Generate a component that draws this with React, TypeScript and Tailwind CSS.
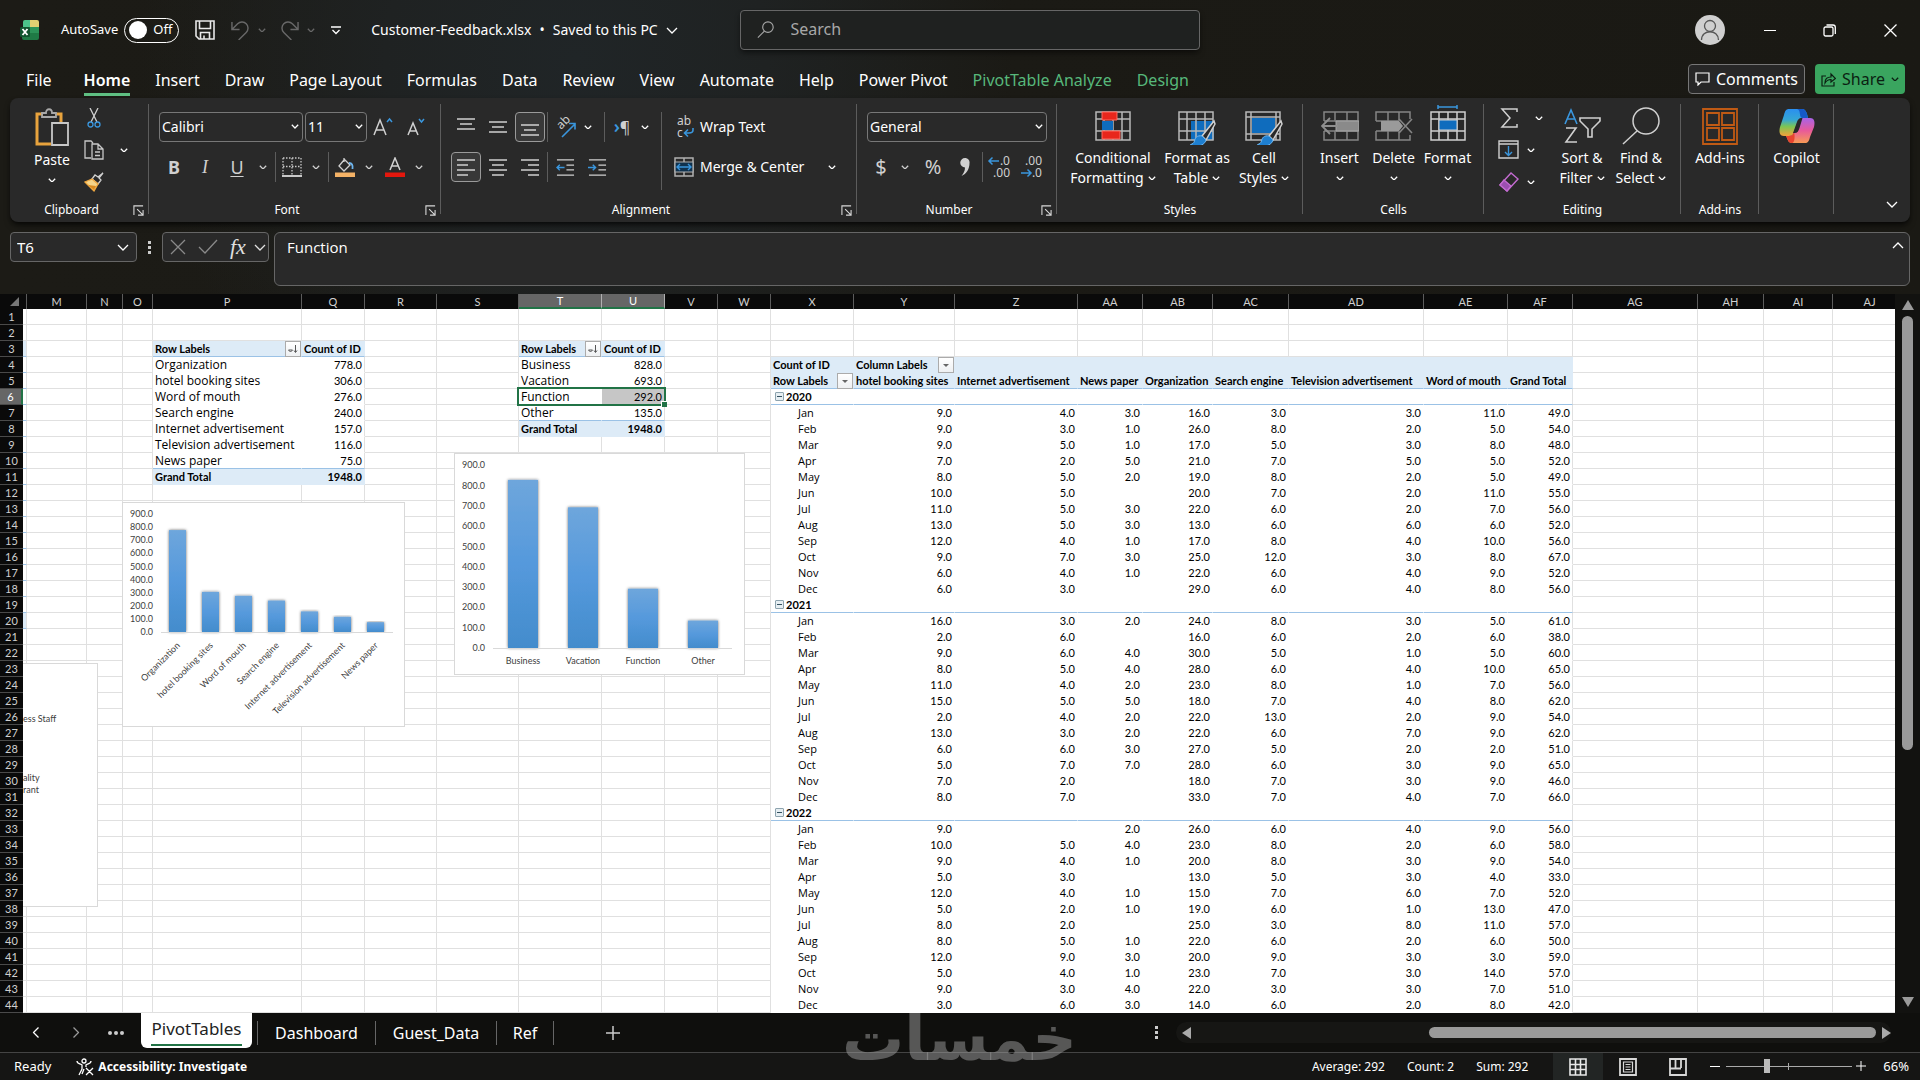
import React from 'react';

type IconProps = { className?: string };

const columns: { name: string; width: string }[] = [
  { name: '', width: 'w-1' },
  { name: 'M', width: 'w-[60px]' },
  { name: 'N', width: 'w-9' },
  { name: 'O', width: 'w-[30px]' },
  { name: 'P', width: 'w-[149px]' },
  { name: 'Q', width: 'w-[63px]' },
  { name: 'R', width: 'w-[72px]' },
  { name: 'S', width: 'w-[82px]' },
  { name: 'T', width: 'w-[83px]' },
  { name: 'U', width: 'w-[63px]' },
  { name: 'V', width: 'w-[53px]' },
  { name: 'W', width: 'w-[53px]' },
  { name: 'X', width: 'w-[83px]' },
  { name: 'Y', width: 'w-[101px]' },
  { name: 'Z', width: 'w-[123px]' },
  { name: 'AA', width: 'w-[65px]' },
  { name: 'AB', width: 'w-[70px]' },
  { name: 'AC', width: 'w-[76px]' },
  { name: 'AD', width: 'w-[135px]' },
  { name: 'AE', width: 'w-[84px]' },
  { name: 'AF', width: 'w-[65px]' },
  { name: 'AG', width: 'w-[125px]' },
  { name: 'AH', width: 'w-[66px]' },
  { name: 'AI', width: 'w-[69px]' },
  { name: 'AJ', width: '' },
];

const months = ['Jan', 'Feb', 'Mar', 'Apr', 'May', 'Jun', 'Jul', 'Aug', 'Sep', 'Oct', 'Nov', 'Dec'];

// null marks a month without entries for that source
const years: { year: string; rows: (number | null)[][] }[] = [
  {
    year: '2020',
    rows: [
      [9, 4, 3, 16, 3, 3, 11, 49],
      [9, 3, 1, 26, 8, 2, 5, 54],
      [9, 5, 1, 17, 5, 3, 8, 48],
      [7, 2, 5, 21, 7, 5, 5, 52],
      [8, 5, 2, 19, 8, 2, 5, 49],
      [10, 5, null, 20, 7, 2, 11, 55],
      [11, 5, 3, 22, 6, 2, 7, 56],
      [13, 5, 3, 13, 6, 6, 6, 52],
      [12, 4, 1, 17, 8, 4, 10, 56],
      [9, 7, 3, 25, 12, 3, 8, 67],
      [6, 4, 1, 22, 6, 4, 9, 52],
      [6, 3, null, 29, 6, 4, 8, 56],
    ],
  },
  {
    year: '2021',
    rows: [
      [16, 3, 2, 24, 8, 3, 5, 61],
      [2, 6, null, 16, 6, 2, 6, 38],
      [9, 6, 4, 30, 5, 1, 5, 60],
      [8, 5, 4, 28, 6, 4, 10, 65],
      [11, 4, 2, 23, 8, 1, 7, 56],
      [15, 5, 5, 18, 7, 4, 8, 62],
      [2, 4, 2, 22, 13, 2, 9, 54],
      [13, 3, 2, 22, 6, 7, 9, 62],
      [6, 6, 3, 27, 5, 2, 2, 51],
      [5, 7, 7, 28, 6, 3, 9, 65],
      [7, 2, null, 18, 7, 3, 9, 46],
      [8, 7, null, 33, 7, 4, 7, 66],
    ],
  },
  {
    year: '2022',
    rows: [
      [9, null, 2, 26, 6, 4, 9, 56],
      [10, 5, 4, 23, 8, 2, 6, 58],
      [9, 4, 1, 20, 8, 3, 9, 54],
      [5, 3, null, 13, 5, 3, 4, 33],
      [12, 4, 1, 15, 7, 6, 7, 52],
      [5, 2, 1, 19, 6, 1, 13, 47],
      [8, 2, null, 25, 3, 8, 11, 57],
      [8, 5, 1, 22, 6, 2, 6, 50],
      [12, 9, 3, 20, 9, 3, 3, 59],
      [5, 4, 1, 23, 7, 3, 14, 57],
      [9, 3, 4, 22, 3, 3, 7, 51],
      [3, 6, 3, 14, 6, 2, 8, 42],
    ],
  },
];

const sources: [string, number][] = [
  ['Organization', 778],
  ['hotel booking sites', 306],
  ['Word of mouth', 276],
  ['Search engine', 240],
  ['Internet advertisement', 157],
  ['Television advertisement', 116],
  ['News paper', 75],
];

const purposes: [string, number][] = [
  ['Business', 828],
  ['Vacation', 693],
  ['Function', 292],
  ['Other', 135],
];

type Cell = {
  text: string;
  bold?: boolean;
  right?: boolean;
  button?: 'sort' | 'filter';
  indent?: boolean;
  toggle?: boolean;
};

const cells: Record<string, Cell> = {};

const addList = (labelCol: string, valueCol: string, list: [string, number][]) => {
  cells[labelCol + 3] = { text: 'Row Labels', bold: true, button: 'sort' };
  cells[valueCol + 3] = { text: 'Count of ID', bold: true };
  list.forEach(([label, value], i) => {
    cells[labelCol + (4 + i)] = { text: label };
    cells[valueCol + (4 + i)] = { text: value.toFixed(1), right: true };
  });
  cells[labelCol + (4 + list.length)] = { text: 'Grand Total', bold: true };
  cells[valueCol + (4 + list.length)] = { text: '1948.0', bold: true, right: true };
};

addList('P', 'Q', sources);
addList('T', 'U', purposes);

const pivotCols = ['Y', 'Z', 'AA', 'AB', 'AC', 'AD', 'AE', 'AF'];
const pivotHeads = [
  'hotel booking sites',
  'Internet advertisement',
  'News paper',
  'Organization',
  'Search engine',
  'Television advertisement',
  'Word of mouth',
  'Grand Total',
];
cells.X4 = { text: 'Count of ID', bold: true };
cells.Y4 = { text: 'Column Labels', bold: true, button: 'filter' };
cells.X5 = { text: 'Row Labels', bold: true, button: 'filter' };
pivotCols.forEach((col, i) => {
  cells[col + 5] = { text: pivotHeads[i], bold: true };
});
years.forEach(({ year, rows }, y) => {
  const top = 6 + y * 13;
  cells['X' + top] = { text: year, bold: true, toggle: true };
  rows.forEach((values, m) => {
    cells['X' + (top + 1 + m)] = { text: months[m], indent: true };
    values.forEach((value, i) => {
      if (value !== null) {
        cells[pivotCols[i] + (top + 1 + m)] = { text: value.toFixed(1), right: true };
      }
    });
  });
});

// Background, gridline and rule colours of one cell
const cellClass = (col: string, row: number) => {
  const grid = 'border-[#e0e0e0]';
  if (col === '') {
    if (row === 3 || row === 20) return 'bg-[#ddebf7] border-r-[#e0e0e0] border-b-[#9bc2e6]';
    return row > 3 && row < 20 ? 'border-r-[#e0e0e0] border-b-[#9bc2e6]' : grid;
  }
  const list = col === 'P' || col === 'Q' ? 11 : col === 'T' || col === 'U' ? 8 : 0;
  if (list && row >= 3 && row <= list) {
    if (row === 3) return 'bg-[#ddebf7] border-r-[#ddebf7] border-b-[#9bc2e6]';
    if (row === list) return 'bg-[#ddebf7] border-[#ddebf7]';
    const edge = col === 'Q' || col === 'U' ? 'border-r-[#e0e0e0]' : 'border-r-white';
    return `${edge} ${row === list - 1 ? 'border-b-[#9bc2e6]' : 'border-b-white'}`;
  }
  if ((col === 'X' || pivotCols.includes(col)) && row >= 4) {
    if (row === 4) return 'bg-[#ddebf7] border-[#ddebf7]';
    if (row === 5) return 'bg-[#ddebf7] border-r-[#ddebf7] border-b-[#9bc2e6]';
    const edge = col === 'AF' ? 'border-r-[#e0e0e0]' : 'border-r-white';
    return `${edge} ${(row - 6) % 13 === 0 ? 'border-b-[#9bc2e6]' : 'border-b-white'}`;
  }
  return grid;
};

const Chevron = ({ className = 'w-2.5' }: IconProps) => (
  <svg viewBox="0 0 10 6" className={className} fill="none" stroke="currentColor" strokeWidth="1.6">
    <path d="M1 1l4 4 4-4" />
  </svg>
);

const ThinChevron = ({ className = 'w-3' }: IconProps) => (
  <svg viewBox="0 0 12 7" className={className} fill="none" stroke="currentColor" strokeWidth="1.3">
    <path d="M1 1l5 5 5-5" />
  </svg>
);

const Drop = ({ label, width = 'w-5' }: { label: string; width?: string }) => (
  <button aria-label={label} className={`flex h-7 items-center justify-center ${width}`}>
    <Chevron className="w-2" />
  </button>
);

const Sep = () => <span className="h-[30px] w-px bg-[#5c5c5c]" />;

const Tool = ({
  label,
  width = 'w-8',
  active,
  children,
}: {
  label: string;
  width?: string;
  active?: boolean;
  children: React.ReactNode;
}) => (
  <button
    aria-label={label}
    className={`flex h-[30px] items-center justify-center rounded-[4px] ${width} ${
      active ? 'border border-[#9a9a9a] bg-[#383838]' : ''
    }`}
  >
    {children}
  </button>
);

const Group = ({
  label,
  width,
  launcher,
  children,
}: {
  label?: string;
  width: string;
  launcher?: boolean;
  children: React.ReactNode;
}) => (
  <section className={`relative flex shrink-0 flex-col pt-1 ${width}`}>
    <div className="h-24">{children}</div>
    <div className="flex h-6 items-center">
      <span className="flex-1 text-center text-xs">{label}</span>
      {launcher && (
        <button aria-label={`${label} settings`} className="w-4">
          <svg viewBox="0 0 12 12" className="w-[11px]" fill="none" stroke="#d8d8d8" strokeWidth="1.2">
            <path d="M1 11V1h10M4.500 4.500l6 6M11 5.500V11H5.500" />
          </svg>
        </button>
      )}
    </div>
    <span className="absolute bottom-2 right-0 top-1.5 w-px bg-[#5c5c5c]" />
  </section>
);

const BigButton = ({
  lines,
  width,
  drop,
  icon,
}: {
  lines: string[];
  width: string;
  drop?: boolean;
  icon: React.ReactNode;
}) => (
  <button className={`flex flex-col items-center pt-1 text-sm leading-5 ${width}`}>
    <span className="mb-0.5 flex h-10 items-center justify-center">{icon}</span>
    {lines.map((line, i) => (
      <span key={i} className="flex h-5 items-center gap-1 whitespace-nowrap">
        {line}
        {drop && i === lines.length - 1 && <Chevron className="w-2" />}
      </span>
    ))}
  </button>
);

const GridLines = ({ color = '#b8b8b8' }: { color?: string }) => (
  <path d="M1 5h34v28H1zM1 12h34M1 24h34M9 5v28M18 5v28M27 5v28" stroke={color} strokeWidth="1.500" fill="none" />
);

const Brush = () => (
  <>
    <path d="M36 14L24 29l4 4L37 17z" fill="#292929" stroke="#d0d0d0" strokeWidth="1.500" />
    <path d="M24 29c-5-1-7 2-7.500 5-.5 2-2 3-4 3.500 6 3 14 1.500 15.500-4.500z" fill="#1e7fd0" stroke="#6db5ee" />
  </>
);

const AlignIcon = ({ lines, y = 4 }: { lines: [number, number][]; y?: number }) => (
  <svg viewBox="0 0 20 22" className="w-5" stroke="#d0d0d0" strokeWidth="1.500">
    {lines.map(([x, w], i) => (
      <path key={i} d={`M${x} ${y + i * 5}h${w}`} />
    ))}
  </svg>
);

const TitleBar = () => (
  <header className="flex h-[60px] items-center text-white">
    <div className="flex w-[740px] shrink-0 items-center text-[13px]">
      <svg viewBox="0 0 20 20" className="ml-5 w-5">
        <path d="M3 2a2 2 0 012-2h5v7H3z" fill="#4cc38a" />
        <path d="M10 0h7a2 2 0 012 2v5h-9z" fill="#e0cf72" />
        <path d="M2 7h17v11a2 2 0 01-2 2H4a2 2 0 01-2-2z" fill="#1f7a45" />
        <path d="M10 7h9v6h-9z" fill="#2c9358" />
        <rect y="7" width="10" height="10" rx="1.500" fill="#11552f" />
        <path d="M2.500 9l5 6M7.500 9l-5 6" stroke="#fff" strokeWidth="1.800" />
      </svg>
      <label className="ml-[21px] flex items-center gap-1.5">
        AutoSave
        <span className="relative flex h-[25px] w-[55px] items-center rounded-full border border-white">
          <input type="checkbox" className="absolute inset-0 opacity-0" />
          <span className="ml-1 h-[18px] w-[18px] rounded-full bg-white" />
          <span className="ml-1.5">Off</span>
        </span>
      </label>
      <button aria-label="Save" className="ml-4">
        <svg viewBox="0 0 20 20" className="w-5" fill="none" stroke="#e8e8e8" strokeWidth="1.600">
          <path d="M1 1h18v18H4l-3-3zM4.500 1v7.500h11V1M5.500 19v-6.500h9V19M9 15.500V19" />
        </svg>
      </button>
      <button aria-label="Undo" className="ml-4 flex items-center gap-2 text-[#686868]">
        <svg viewBox="0 0 20 20" className="w-[19px]" fill="none" stroke="currentColor" strokeWidth="1.500">
          <path d="M1 1v8h8M1.500 8.500L7 3c3-3 7-2 9 0s3 6 0 9l-8 8" />
        </svg>
        <Chevron className="w-2" />
      </button>
      <button aria-label="Redo" className="ml-3.5 flex items-center gap-2 text-[#686868]">
        <svg viewBox="0 0 20 20" className="w-[19px]" fill="none" stroke="currentColor" strokeWidth="1.500">
          <path d="M19 1v8h-8M18.500 8.500L13 3c-3-3-7-2-9 0s-3 6 0 9l8 8" />
        </svg>
        <Chevron className="w-2" />
      </button>
      <button aria-label="Customize Quick Access Toolbar" className="ml-4">
        <svg viewBox="0 0 10 9" className="w-2.5" fill="none" stroke="#fff" strokeWidth="1.300">
          <path d="M0 1h10M1.500 4L5 7.500 8.500 4" />
        </svg>
      </button>
      <h1 className="ml-[30px] flex items-center gap-2 whitespace-nowrap text-sm">
        Customer-Feedback.xlsx <span>•</span> Saved to this PC
        <ThinChevron />
      </h1>
    </div>
    <label className="flex h-10 w-[460px] items-center gap-4 rounded-[4px] border border-[#666] bg-[#1f2120] px-4 shadow-md shadow-black/40">
      <svg viewBox="0 0 20 20" className="w-[19px]" fill="none" stroke="#a8a8a8" strokeWidth="1.300">
        <circle cx="12.500" cy="7" r="6" />
        <path d="M8.500 11.500L1 19" />
      </svg>
      <input
        type="text"
        aria-label="Search"
        placeholder="Search"
        className="w-full bg-transparent pb-0.5 text-base outline-none placeholder:text-[#a8a8a8]"
      />
    </label>
    <div className="ml-auto flex items-center pr-[23px]">
      <button aria-label="Account" className="mr-[39px] h-[30px] w-[30px] overflow-hidden rounded-full bg-[#cfcfcf]">
        <svg viewBox="0 0 30 30" fill="none" stroke="#555" strokeWidth="1.300">
          <circle cx="15" cy="11" r="5.500" />
          <path d="M6.500 25c0-11 17-11 17 0" />
        </svg>
      </button>
      <button aria-label="Minimize" className="mr-[47px] h-[13px] w-3">
        <span className="block h-px bg-white" />
      </button>
      <button aria-label="Restore" className="mr-12">
        <svg viewBox="0 0 13 13" className="w-[13px]" fill="none" stroke="#fff" strokeWidth="1.300">
          <rect x="1" y="3" width="9" height="9" rx="1.500" />
          <path d="M3.500 1H10a2.300 2.300 0 012.300 2.300V10" />
        </svg>
      </button>
      <button aria-label="Close">
        <svg viewBox="0 0 13 13" className="w-[13px]" stroke="#fff" strokeWidth="1.300">
          <path d="M.5.5l12 12M12.500.5l-12 12" />
        </svg>
      </button>
    </div>
  </header>
);

const tabs = [
  'Home',
  'Insert',
  'Draw',
  'Page Layout',
  'Formulas',
  'Data',
  'Review',
  'View',
  'Automate',
  'Help',
  'Power Pivot',
  'PivotTable Analyze',
  'Design',
];

const RibbonTabs = () => (
  <nav className="flex h-[38px] items-start pl-[26px] pr-[15px] text-white">
    <button className="mr-8 mt-[7px] h-[29px] border-b-[3px] border-transparent text-base">File</button>
    <div className="flex gap-[25px] whitespace-nowrap pt-[7px] text-base">
      {tabs.map((tab) => (
        <button
          key={tab}
          className={`h-[29px] border-b-[3px] ${tab === 'Home' ? 'border-[#5fbf82] font-semibold' : 'border-transparent'} ${
            tab === 'PivotTable Analyze' || tab === 'Design' ? 'text-[#57b87b]' : ''
          }`}
        >
          {tab}
        </button>
      ))}
    </div>
    <button className="ml-auto mt-1 flex h-[30px] items-center gap-1.5 rounded-[4px] border border-[#777] bg-[#272727] px-1.5 text-base">
      <svg viewBox="0 0 15 14" className="w-[15px]" fill="none" stroke="#fff" strokeWidth="1.200">
        <path d="M1 1h13v9H6l-3 3v-3H1z" />
      </svg>
      Comments
    </button>
    <button className="ml-2.5 mt-1 flex h-[30px] items-center gap-1.5 rounded-[4px] bg-[#3aa55f] px-1.5 text-base text-[#0b1f12]">
      <svg viewBox="0 0 15 15" className="w-[15px]" fill="none" stroke="currentColor" strokeWidth="1.200">
        <path d="M5 4H1v10h12v-4M4 11c0-4 2-6 6-6V2l4.500 4.500L10 10V7.500c-3 0-4.500 1-6 3.500z" />
      </svg>
      Share
      <Chevron className="w-2" />
    </button>
  </nav>
);

const ClipboardGroup = () => (
  <Group label="Clipboard" width="w-[139px]" launcher>
    <div className="flex pl-3">
      <button className="flex w-[60px] flex-col items-center pt-1.5 text-sm leading-5">
        <svg viewBox="0 0 34 38" className="h-[38px] w-[34px]" fill="none" strokeWidth="1.800">
          <path d="M8 6H2v30h14M20 6h6v8" stroke="#e8a33d" strokeWidth="3" />
          <path d="M7 9V5h4c0-5 6-5 6 0h4v4z" stroke="#a8a8a8" />
          <path d="M17 15h16v22H17z" stroke="#c8c8c8" fill="#292929" />
        </svg>
        <span className="mt-1">Paste</span>
        <span className="flex h-5 items-center">
          <Chevron className="w-2" />
        </span>
      </button>
      <div className="flex w-6 flex-col">
        <button aria-label="Cut" className="flex h-8 items-center justify-center">
          <svg viewBox="0 0 14 20" className="h-5" fill="none" strokeWidth="1.300">
            <path d="M3 0l7 14M11 0L4 14" stroke="#d0d0d0" />
            <circle cx="3.500" cy="16.500" r="2.500" stroke="#3a96dd" />
            <circle cx="10.500" cy="16.500" r="2.500" stroke="#3a96dd" />
          </svg>
        </button>
        <button aria-label="Copy" className="flex h-8 items-center justify-center">
          <svg viewBox="0 0 20 20" className="w-5" fill="none" stroke="#c8c8c8" strokeWidth="1.300">
            <path d="M7 18H1V1h6l2 2M8 4h6l5 5v10H8zM14 4v5h5M11 12h5M11 15.500h5" />
          </svg>
        </button>
        <button aria-label="Format Painter" className="flex h-8 items-center justify-center">
          <svg viewBox="0 0 20 20" className="w-5" fill="none" strokeWidth="1.300">
            <path d="M19 1l-5 4-3-2-3 4 6 5 3-4-2-2z" stroke="#d0d0d0" />
            <path d="M8 7L1 10l9 9 4-7z" fill="#f5d58a" stroke="#f0a840" />
            <path d="M4 13l6 5 2-4z" fill="#d98a20" />
          </svg>
        </button>
      </div>
      <div className="flex items-center pl-2">
        <Drop label="Copy options" />
      </div>
    </div>
  </Group>
);

const selectClass = 'h-[30px] w-full appearance-none rounded-[4px] border border-[#777] bg-[#292929] pl-0.5 text-sm';

const SelectBox = ({ label, value, width }: { label: string; value: string; width: string }) => (
  <label className={`relative ${width}`}>
    <select aria-label={label} className={selectClass}>
      <option>{value}</option>
    </select>
    <span className="pointer-events-none absolute right-1 top-3">
      <Chevron className="w-2" />
    </span>
  </label>
);

const FontGroup = () => (
  <Group label="Font" width="w-[292px]" launcher>
    <div className="flex flex-col gap-2.5 pl-2.5 pt-2.5">
      <div className="flex items-center">
        <SelectBox label="Font" value="Calibri" width="w-[144px]" />
        <SelectBox label="Font size" value="11" width="ml-0.5 w-[62px]" />
        <Tool label="Increase Font Size">
          <svg viewBox="0 0 20 20" className="w-5" fill="none" strokeWidth="1.500">
            <path d="M1 18L7 3l6 15M3 13h8" stroke="#d0d0d0" />
            <path d="M14 5l2.500-3L19 5" stroke="#3a96dd" />
          </svg>
        </Tool>
        <Tool label="Decrease Font Size">
          <svg viewBox="0 0 20 20" className="w-5" fill="none" strokeWidth="1.500">
            <path d="M3 18L8 6l5 12M5 14h6" stroke="#d0d0d0" />
            <path d="M14 2l2.500 3L19 2" stroke="#3a96dd" />
          </svg>
        </Tool>
      </div>
      <div className="flex items-center text-lg text-[#d0d0d0]">
        <Tool label="Bold" width="w-[30px]">
          <b>B</b>
        </Tool>
        <Tool label="Italic">
          <i className="font-['Liberation_Serif',serif]">I</i>
        </Tool>
        <Tool label="Underline">
          <u className="underline-offset-2">U</u>
        </Tool>
        <Drop label="Underline options" />
        <span className="w-0.5" />
        <Sep />
        <Tool label="Borders">
          <svg viewBox="0 0 20 20" className="w-5" fill="none" stroke="#c8c8c8" strokeWidth="1.300">
            <path d="M1 1h18v17M1 1v17M10 1v17M1 9.500h18" strokeDasharray="1.500 1.500" />
            <path d="M0 19h20" strokeWidth="1.800" />
          </svg>
        </Tool>
        <Drop label="Border options" width="w-4" />
        <span className="w-1" />
        <Sep />
        <Tool label="Fill Color">
          <svg viewBox="0 0 20 20" className="w-5" fill="none" strokeWidth="1.300">
            <path d="M9 1v4M9 2l6 6-6 6-5-5 5-6" stroke="#d0d0d0" />
            <path d="M14 6c3 0 4 2 3.500 6" stroke="#6db5ee" strokeWidth="1.800" />
            <path d="M0 15.500h20V20H0z" fill="#f4b266" />
          </svg>
        </Tool>
        <Drop label="Fill options" width="w-4" />
        <span className="w-0.5" />
        <Tool label="Font Color">
          <svg viewBox="0 0 20 20" className="w-5" fill="none" strokeWidth="1.500">
            <path d="M5 13L10 1l5 12M6.500 9h7" stroke="#d0d0d0" />
            <path d="M0 15.500h20V20H0z" fill="#e3170d" />
          </svg>
        </Tool>
        <Drop label="Font color options" width="w-4" />
      </div>
    </div>
  </Group>
);

const Indent = ({ flip }: { flip?: boolean }) => (
  <svg viewBox="0 0 20 20" className="w-[19px]" fill="none" strokeWidth="1.500">
    <path d="M1 2h18M11 7.500h8M11 12.500h8M1 18h18" stroke="#d0d0d0" />
    {flip ? <path d="M0 10h8M5 7l3 3-3 3" stroke="#3a96dd" /> : <path d="M9 10H1M4 7l-3 3 3 3" stroke="#3a96dd" />}
  </svg>
);

const AlignmentGroup = () => (
  <Group label="Alignment" width="w-[416px]" launcher>
    <div className="flex pl-2.5 pt-2.5">
      <div className="flex w-[210px] flex-col gap-2.5">
        <div className="flex items-center gap-0.5">
          <Tool label="Top Align" width="w-[30px]">
            <AlignIcon y={3} lines={[[1, 18], [4, 12], [1, 18]]} />
          </Tool>
          <Tool label="Middle Align" width="w-[30px]">
            <AlignIcon y={6} lines={[[1, 18], [4, 12], [1, 18]]} />
          </Tool>
          <Tool label="Bottom Align" width="w-[30px]" active>
            <AlignIcon y={9} lines={[[1, 18], [4, 12], [1, 18]]} />
          </Tool>
          <Sep />
          <Tool label="Orientation" width="w-[30px]">
            <svg viewBox="0 0 20 20" className="w-5 overflow-visible" fill="none">
              <text x="0" y="0" transform="translate(6 13) rotate(-45)" fontSize="12" fill="#d0d0d0">
                ab
              </text>
              <path d="M7 20L20 7M14 6.500h6v6" stroke="#3a96dd" strokeWidth="1.600" />
            </svg>
          </Tool>
          <Drop label="Orientation options" width="w-3" />
          <span className="w-1.5" />
          <Sep />
          <Tool label="Text Direction" width="w-[30px]">
            <span className="text-lg font-semibold leading-none text-[#3a96dd]">
              ›<span className="text-base font-normal text-[#d0d0d0]">¶</span>
            </span>
          </Tool>
          <Drop label="Text direction options" width="w-3" />
        </div>
        <div className="flex items-center gap-0.5">
          <Tool label="Align Left" width="w-[30px]" active>
            <AlignIcon lines={[[1, 18], [1, 11], [1, 18], [1, 11]]} />
          </Tool>
          <Tool label="Center" width="w-[30px]">
            <AlignIcon lines={[[1, 18], [4, 12], [1, 18], [4, 12]]} />
          </Tool>
          <Tool label="Align Right" width="w-[30px]">
            <AlignIcon lines={[[1, 18], [8, 11], [1, 18], [8, 11]]} />
          </Tool>
          <Sep />
          <Tool label="Decrease Indent" width="w-[30px]">
            <Indent />
          </Tool>
          <Tool label="Increase Indent" width="w-[30px]">
            <Indent flip />
          </Tool>
        </div>
      </div>
      <span className="h-[78px] w-px bg-[#5c5c5c]" />
      <div className="flex flex-col gap-2.5 pl-3 text-sm">
        <button className="flex h-[30px] items-center gap-1.5">
          <svg viewBox="0 0 20 24" className="w-5 overflow-visible" fill="none">
            <text x="3" y="10" fontSize="12" fill="#d0d0d0">
              ab
            </text>
            <text x="3" y="22" fontSize="12" fill="#d0d0d0">
              c
            </text>
            <path d="M19 13v2q0 3-4 3h-4M14 14.500L10.500 18l3.500 3.500" stroke="#3a96dd" strokeWidth="1.600" />
          </svg>
          Wrap Text
        </button>
        <div className="flex h-[30px] items-center">
          <button className="flex items-center gap-1.5">
            <svg viewBox="0 0 20 20" className="w-5" fill="none">
              <path d="M1 1h18v18H1zM10 1v4M10 15v4" stroke="#b0b0b0" strokeWidth="1.500" />
              <path d="M1 5h18v10H1z" fill="#10324e" stroke="#b0b0b0" strokeWidth="1.200" />
              <path d="M3 10h14M6 7l-3 3 3 3M14 7l3 3-3 3" stroke="#3a96dd" strokeWidth="1.400" />
            </svg>
            Merge &amp; Center
          </button>
          <span className="w-[18px]" />
          <Drop label="Merge options" />
        </div>
      </div>
    </div>
  </Group>
);

const Decimals = ({ more }: { more?: boolean }) => (
  <svg viewBox="0 0 22 24" className="w-[22px] overflow-visible" fill="none">
    <text x="22" y="10" textAnchor="end" fontSize="12" fill="#d0d0d0">
      {more ? '.0' : '.00'}
    </text>
    <text x="22" y="22" textAnchor="end" fontSize="12" fill="#d0d0d0">
      {more ? '.00' : '.0'}
    </text>
    {more ? (
      <path d="M11 6H1M4.500 2.500L1 6l3.500 3.500" stroke="#3a96dd" strokeWidth="1.500" />
    ) : (
      <path d="M1 18h10M7.500 14.500L11 18l-3.500 3.500" stroke="#3a96dd" strokeWidth="1.500" />
    )}
  </svg>
);

const NumberGroup = () => (
  <Group label="Number" width="w-[200px]" launcher>
    <div className="flex flex-col gap-2.5 pl-2.5 pt-2.5">
      <SelectBox label="Number Format" value="General" width="w-[180px]" />
      <div className="flex items-center text-xl text-[#d0d0d0]">
        <Tool label="Accounting Number Format" width="w-7">
          $
        </Tool>
        <Drop label="Accounting options" />
        <Tool label="Percent Style" width="w-9">
          %
        </Tool>
        <Tool label="Comma Style" width="w-7">
          <svg viewBox="0 0 10 18" className="h-[18px]" fill="#d0d0d0">
            <path d="M5 0a4.300 4.300 0 014.500 5c0 6-3 11-8 13 2-3 3.500-5 3.500-8.500A4.500 4.500 0 015 0z" />
          </svg>
        </Tool>
        <span className="w-[3px]" />
        <Sep />
        <Tool label="Increase Decimal">
          <Decimals more />
        </Tool>
        <Tool label="Decrease Decimal">
          <Decimals />
        </Tool>
      </div>
    </div>
  </Group>
);

const Ribbon = () => (
  <div className="mx-2.5 flex h-[124px] overflow-hidden rounded-lg bg-[#292929] text-white shadow-md shadow-black/60">
    <ClipboardGroup />
    <FontGroup />
    <AlignmentGroup />
    <NumberGroup />
    <Group label="Styles" width="w-[246px]">
      <div className="flex justify-center">
        <BigButton
          lines={['Conditional', 'Formatting']}
          width="w-[88px]"
          drop
          icon={
            <svg viewBox="0 0 36 38" className="w-9">
              <GridLines />
              <path d="M7 5h15v8H7zM7 24h18v8H7z" fill="#e8261c" stroke="#ff6a60" />
              <path d="M7 14h11v9H7z" fill="#0f6cbd" />
            </svg>
          }
        />
        <BigButton
          lines={['Format as', 'Table']}
          width="w-20"
          drop
          icon={
            <svg viewBox="0 0 38 38" className="w-[38px]">
              <path d="M13 14h23v19H13z" fill="#0f6cbd" />
              <GridLines />
              <Brush />
            </svg>
          }
        />
        <BigButton
          lines={['Cell', 'Styles']}
          width="w-[54px]"
          drop
          icon={
            <svg viewBox="0 0 38 38" className="w-[38px]">
              <path d="M1 5h34v28H1zM1 10h34M1 27h34M6 5v28M31 5v28" stroke="#b8b8b8" strokeWidth="1.500" fill="none" />
              <path d="M7 11h23v15H7z" fill="#0f6cbd" />
              <Brush />
            </svg>
          }
        />
      </div>
    </Group>
    <Group label="Cells" width="w-[181px]">
      <div className="flex justify-center">
        <BigButton
          lines={['Insert', '']}
          width="w-[54px]"
          drop
          icon={
            <svg viewBox="0 0 38 38" className="w-[38px]" fill="none">
              <path d="M3 14V5h34v9M3 24v9h34v-9M14 5v9M26 5v9M14 24v9M26 24v9M3 14h34M3 24h34" stroke="#858585" strokeWidth="1.500" />
              <path d="M15 14h23v10H15z" fill="#8a8a8a" stroke="#a8a8a8" />
              <path d="M17 19H1M9 11l-8 8 8 8" stroke="#8f8f8f" strokeWidth="1.800" />
            </svg>
          }
        />
        <BigButton
          lines={['Delete', '']}
          width="w-[54px]"
          drop
          icon={
            <svg viewBox="0 0 38 38" className="w-[38px]" fill="none">
              <path
                d="M1 14V5h34v7M1 24v9h34v-5M13 5v9M24 5v9M13 24v9M24 24v9M1 14h22M1 24h22"
                stroke="#858585"
                strokeWidth="1.500"
              />
              <path d="M6 14h18l4 5-4 5H6z" fill="#9a9a9a" />
              <path d="M24 12l13 14M37 12L24 26" stroke="#858585" strokeWidth="1.600" />
            </svg>
          }
        />
        <BigButton
          lines={['Format', '']}
          width="w-[54px]"
          drop
          icon={
            <svg viewBox="0 0 36 38" className="w-9 overflow-visible" fill="none">
              <GridLines color="#d0d0d0" />
              <path d="M9 13h18v10H9z" fill="#0f6cbd" stroke="#d0d0d0" />
              <path d="M8 0h19M8-2v4M27-2v4" stroke="#3a96dd" strokeWidth="1.500" />
            </svg>
          }
        />
      </div>
    </Group>
    <Group label="Editing" width="w-[197px]">
      <div className="flex pl-[13px]">
        <div className="flex w-14 flex-col">
          <button aria-label="AutoSum" className="flex h-8 items-center gap-3.5">
            <svg viewBox="0 0 24 20" className="w-6" fill="none" stroke="#d0d0d0" strokeWidth="1.500">
              <path d="M20 4V1H5l8 9-8 9h15v-3" />
            </svg>
            <Chevron className="w-2" />
          </button>
          <button aria-label="Fill" className="flex h-8 items-center gap-1.5">
            <svg viewBox="0 0 24 20" className="w-6" fill="none" strokeWidth="1.400">
              <path d="M2 1h19v17H2zM2 4h19" stroke="#d0d0d0" />
              <path d="M11.500 6v9M8 12l3.500 3.500L15 12" stroke="#3a96dd" />
            </svg>
            <Chevron className="w-2" />
          </button>
          <button aria-label="Clear" className="flex h-8 items-center gap-1.5">
            <svg viewBox="0 0 24 20" className="w-6" fill="none" strokeWidth="1.400">
              <path d="M3 13L14 1l7 6-11 12z" stroke="#c36bd0" />
              <path d="M3 13l4-5 7 6-4 5z" fill="#9b4fb0" stroke="#c36bd0" />
            </svg>
            <Chevron className="w-2" />
          </button>
        </div>
        <BigButton
          lines={['Sort &', 'Filter']}
          width="w-[58px]"
          drop
          icon={
            <svg viewBox="0 0 38 38" className="w-[38px]" fill="none" strokeWidth="1.600">
              <path d="M2 17L8 3l6 14M4 12h8" stroke="#3a96dd" />
              <path d="M3 21h10L3 35h11" stroke="#d0d0d0" />
              <path d="M17 11h20v3l-8 8v8h-4v-8l-8-8z" stroke="#d0d0d0" />
            </svg>
          }
        />
        <BigButton
          lines={['Find &', 'Select']}
          width="w-[60px]"
          drop
          icon={
            <svg viewBox="0 0 38 38" className="w-[38px]" fill="none" stroke="#d0d0d0" strokeWidth="1.500">
              <circle cx="24" cy="14" r="13" />
              <path d="M15 24L1 37" />
            </svg>
          }
        />
      </div>
    </Group>
    <Group label="Add-ins" width="w-[78px]">
      <div className="flex justify-center">
        <BigButton
          lines={['Add-ins']}
          width="w-16"
          icon={
            <svg viewBox="0 0 36 38" className="w-9" fill="none" stroke="#c05a14" strokeWidth="1.800">
              <path d="M1 2h34v35H1zM5 6h12v12H5zM20 6h12v12H20zM5 21h12v12H5zM20 21h12v12H20z" />
            </svg>
          }
        />
      </div>
    </Group>
    <Group width="w-[75px]">
      <div className="flex justify-center">
        <BigButton
          lines={['Copilot']}
          width="w-16"
          icon={
            <svg viewBox="0 0 38 36" className="w-[38px]">
              <defs>
                <linearGradient id="copilotLeft" x1="0" y1="0" x2="0" y2="1">
                  <stop offset="0" stopColor="#2a8ff0" />
                  <stop offset=".4" stopColor="#35a7d4" />
                  <stop offset=".65" stopColor="#7cc653" />
                  <stop offset="1" stopColor="#f5a13a" />
                </linearGradient>
                <linearGradient id="copilotRight" x1="0" y1="0" x2="0" y2="1">
                  <stop offset="0" stopColor="#a863e8" />
                  <stop offset=".5" stopColor="#e85a9a" />
                  <stop offset="1" stopColor="#f79a55" />
                </linearGradient>
              </defs>
              <path d="M11 1h13c3 0 4 2 5 5l1 4h-6c-3 0-4 2-5 5l-3 9c-1 3-2 4-5 4H6c-5 0-5-5-4-9L6 7c1-4 2-6 5-6z" fill="url(#copilotLeft)" />
              <path d="M22 1h2c3 0 4 2 5 5l1 4h-6c-3 0-1-9-5-9z" fill="#1659c7" />
              <path d="M27 35H14c-3 0-4-2-5-5l-1-2h3c3 0 4-1 5-4l3-9c1-3 2-5 5-5h8c5 0 5 5 4 9l-4 10c-1 4-2 6-5 6z" fill="url(#copilotRight)" />
              <path d="M14 35c-3 0-4-2-5-5l-1-2h3c3 0 4-1 5-4 1 3 1 11-2 11z" fill="#e8442f" />
              <path d="M15 25l4-11c.5-2 1.500-3 3.500-4h2l-3 10c-1 3-2 5-5 5z" fill="#292929" />
            </svg>
          }
        />
      </div>
    </Group>
    <button aria-label="Collapse Ribbon" className="ml-auto mr-3 mt-auto mb-3.5">
      <ThinChevron />
    </button>
  </div>
);

const FormulaBar = () => (
  <div className="flex h-[72px] items-start px-2.5 pt-2.5 text-white">
    <label className="relative w-[127px]">
      <input
        aria-label="Name Box"
        defaultValue="T6"
        className="h-[30px] w-full rounded-[4px] border border-[#666] bg-[#292929] pl-1.5 text-[15px]"
      />
      <ThinChevron className="absolute right-2 top-3 w-3" />
    </label>
    <span className="flex h-[30px] w-[25px] flex-col items-center justify-center gap-0.5">
      <i className="h-[3px] w-[3px] bg-[#ccc]" />
      <i className="h-[3px] w-[3px] bg-[#ccc]" />
      <i className="h-[3px] w-[3px] bg-[#ccc]" />
    </span>
    <div className="flex h-[30px] w-[107px] items-center rounded-[4px] border border-[#666] bg-[#292929] pl-[7px]">
      <button aria-label="Cancel">
        <svg viewBox="0 0 16 16" className="w-4" stroke="#8a8a8a" strokeWidth="1.300">
          <path d="M1 1l14 14M15 1L1 15" />
        </svg>
      </button>
      <button aria-label="Enter" className="ml-3">
        <svg viewBox="0 0 20 16" className="w-5" fill="none" stroke="#8a8a8a" strokeWidth="1.300">
          <path d="M1 8l6 6L19 1" />
        </svg>
      </button>
      <button
        aria-label="Insert Function"
        className="ml-3 flex items-center gap-2 font-['Liberation_Serif',serif] text-[22px] leading-none text-[#e0e0e0] italic"
      >
        fx
        <ThinChevron />
      </button>
    </div>
    <label className="relative ml-[5px] flex-1">
      <textarea
        aria-label="Formula Bar"
        defaultValue="Function"
        className="block h-[54px] w-full resize-none rounded-md border border-[#666] bg-[#292929] px-3 pt-[3px] font-['Open_Sans','Noto_Sans',sans-serif] text-[15px]"
      />
      <ThinChevron className="absolute right-1.5 top-2.5 w-3 rotate-180" />
    </label>
  </div>
);

const ColumnChart = ({
  data,
  title,
  width,
  height,
  base,
  step,
  axis,
  first,
  pitch,
  bar,
  tilted,
}: {
  data: [string, number][];
  title: string;
  width: number;
  height: number;
  base: number;
  step: number;
  axis: [number, number];
  first: number;
  pitch: number;
  bar: number;
  tilted?: boolean;
}) => (
  <svg
    role="img"
    aria-label={title}
    width={width}
    height={height}
    className="block border border-[#d9d9d9] bg-white"
    fontSize="9"
    fill="#404040"
  >
    <defs>
      <linearGradient id="barFill" x1="0" y1="0" x2="0" y2="1">
        <stop offset="0" stopColor="#6ea6dc" />
        <stop offset=".5" stopColor="#5599dc" />
        <stop offset="1" stopColor="#438ccc" />
      </linearGradient>
      <filter id="barShadow" x="-20%" y="-10%" width="140%" height="120%">
        <feDropShadow dx="0" dy="0" stdDeviation="1.500" floodColor="#000" floodOpacity=".6" />
      </filter>
    </defs>
    {Array.from({ length: 10 }, (_, i) => (
      <text key={i} x="30" y={base + 3 - i * step} textAnchor="end">
        {(i * 100).toFixed(1)}
      </text>
    ))}
    {data.map(([label, value], i) => {
      const x = first + i * pitch;
      const h = (value / 100) * step;
      return (
        <g key={label}>
          <rect x={x} y={base - h} width={bar} height={h} fill="url(#barFill)" filter="url(#barShadow)" />
          {tilted ? (
            <text transform={`translate(${x + bar / 2 + 3} ${base + 14}) rotate(-45)`} textAnchor="end">
              {label}
            </text>
          ) : (
            <text x={x + bar / 2} y={base + 16} textAnchor="middle">
              {label}
            </text>
          )}
        </g>
      );
    })}
    <path d={`M${axis[0]} ${base + 0.5}H${axis[1]}`} stroke="#d9d9d9" />
  </svg>
);

const FieldButton = ({ kind }: { kind: 'sort' | 'filter' }) => (
  <button
    aria-label={kind === 'sort' ? 'Sorted' : 'Filter'}
    className="absolute right-0 top-0 h-4 w-4 border border-[#ababab] bg-gradient-to-b from-white to-[#eef0f2]"
  >
    <svg viewBox="0 0 14 14" fill="none" stroke="#555">
      {kind === 'sort' ? (
        <path d="M2.500 8h4L4.500 10zM9.500 3v7M8 8.500l1.500 2 1.500-2" />
      ) : (
        <path d="M4 6h6L7 9z" fill="#666" stroke="none" />
      )}
    </svg>
  </button>
);

const CellContent = ({ cell }: { cell: Cell }) => {
  if (cell.toggle) {
    return (
      <button className="flex items-center gap-0.5 pl-0.5">
        <span className="flex h-[9px] w-[9px] items-center justify-center rounded-[1px] border border-[#8da3ae] bg-[#e6eef2]">
          <span className="h-px w-[5px] bg-[#33505f]" />
        </span>
        {cell.text}
      </button>
    );
  }
  return (
    <>
      {cell.text}
      {cell.button && <FieldButton kind={cell.button} />}
    </>
  );
};

const textClass = (cell?: Cell) => {
  if (!cell) return '';
  if (cell.bold) return cell.right ? 'pr-0.5 text-right font-bold' : 'pl-0.5 font-bold';
  if (cell.right) return 'pr-0.5 text-right';
  return cell.indent ? "pl-[27px] font-['Open_Sans',sans-serif]" : "pl-0.5 font-['Open_Sans',sans-serif] text-xs leading-[15px]";
};

const Sheet = () => (
  <div className="relative min-w-0 flex-1 overflow-hidden bg-white font-[Lato,'Open_Sans',sans-serif]">
    <table className="w-[calc(100%+12px)] table-fixed border-separate border-spacing-0 text-[11px] leading-[15px] whitespace-nowrap text-black">
      <colgroup>
        <col className="w-[23px]" />
        {columns.map((col) => (
          <col key={col.name} className={col.width} />
        ))}
      </colgroup>
      <thead>
        <tr className="bg-[#0a0a0a] text-[#d0d0d0]">
          <th className="h-[15px] p-0">
            <svg viewBox="0 0 23 13" className="w-[23px]">
              <path d="M19 2v9h-9z" fill="#777" />
            </svg>
          </th>
          {columns.map((col) => (
            <th
              key={col.name}
              scope="col"
              className={`h-[15px] border-r border-[#5c5c5c] p-0 font-normal leading-[13px] ${
                col.name === 'T' || col.name === 'U'
                  ? 'border-r-[#b0b0b0] border-b-2 border-b-[#217346] bg-[#666] text-white'
                  : ''
              }`}
            >
              {col.name}
            </th>
          ))}
        </tr>
      </thead>
      <tbody>
        {Array.from({ length: 44 }, (_, i) => i + 1).map((row) => (
          <tr key={row}>
            <th
              scope="row"
              className={`h-4 border-b border-b-[#4a4a4a] p-0 font-normal ${
                row === 6 ? 'border-r-2 border-r-[#217346] bg-[#666] text-white' : 'bg-[#0a0a0a] text-[#d0d0d0]'
              }`}
            >
              {row}
            </th>
            {columns.map((col) => {
              const cell = cells[col.name + row];
              return (
                <td
                  key={col.name}
                  className={`relative h-4 border-r border-b p-0 ${cellClass(col.name, row)} ${textClass(cell)} ${
                    col.name === 'U' && row === 6 ? 'bg-[#c6c6c6]' : ''
                  }`}
                >
                  {cell && <CellContent cell={cell} />}
                </td>
              );
            })}
          </tr>
        ))}
      </tbody>
    </table>

    {/* Active selection T6:U6 */}
    <div className="pointer-events-none absolute left-[517px] top-[93px] h-[19px] w-[149px] border-2 border-[#217346]">
      <span className="absolute -bottom-[3px] -right-[3px] h-[6px] w-[6px] border-l border-t border-white bg-[#217346]" />
    </div>

    {/* Charts float over the grid */}
    <div className="absolute left-[122px] top-[208px]">
      <ColumnChart
        title="Count by source"
        data={sources}
        width={283}
        height={225}
        base={129}
        step={13.1}
        axis={[38, 270]}
        first={46}
        pitch={33}
        bar={17}
        tilted
      />
    </div>
    <div className="absolute left-[454px] top-[159px]">
      <ColumnChart
        title="Count by purpose"
        data={purposes}
        width={291}
        height={222}
        base={194}
        step={20.3}
        axis={[38, 277]}
        first={53}
        pitch={60}
        bar={30}
      />
    </div>
    <div className="absolute left-[23px] top-[369px] h-[244px] w-[75px] overflow-hidden border border-l-0 border-[#d9d9d9] bg-white pt-[49px] text-[9px] leading-3 text-[#404040]">
      <p>ess Staff</p>
      <p className="mt-[47px]">ality</p>
      <p>rant</p>
    </div>
  </div>
);

const VerticalScroll = () => (
  <div className="flex w-[25px] shrink-0 flex-col items-center bg-[#121210] py-1.5 text-[#9a9a9a]">
    <button aria-label="Scroll up">
      <svg viewBox="0 0 12 10" className="w-3" fill="currentColor">
        <path d="M6 0l6 10H0z" />
      </svg>
    </button>
    <span className="mt-1.5 h-[434px] w-[11px] rounded-full bg-[#9a9a9a]" />
    <button aria-label="Scroll down" className="mt-auto">
      <svg viewBox="0 0 12 10" className="w-3" fill="currentColor">
        <path d="M6 10L0 0h12z" />
      </svg>
    </button>
  </div>
);

const SheetTabs = () => (
  <div className="relative flex h-[39px] items-center bg-[#0f0f0d] text-white">
    <div className="flex w-[141px] items-center pl-[30px]">
      <button aria-label="Previous sheet">
        <ThinChevron className="w-3 rotate-90" />
      </button>
      <button aria-label="Next sheet" className="ml-7 text-[#9a9a9a]">
        <ThinChevron className="w-3 -rotate-90" />
      </button>
      <button aria-label="All sheets" className="ml-[26px] flex gap-0.5">
        <i className="h-1 w-1 rounded-full bg-[#ccc]" />
        <i className="h-1 w-1 rounded-full bg-[#ccc]" />
        <i className="h-1 w-1 rounded-full bg-[#ccc]" />
      </button>
    </div>
    <button className="h-[35px] w-[111px] self-start rounded-b-md bg-white px-2.5 text-[17px] text-[#222]">
      <span className="block border-b-2 border-[#217346] pb-px leading-7 whitespace-nowrap">PivotTables</span>
    </button>
    <div className="flex items-center text-base">
      <button className="ml-[5px] h-6 w-[119px] border-x border-[#666] leading-6">Dashboard</button>
      <button className="h-6 w-[121px] border-r border-[#666] leading-6">Guest_Data</button>
      <button className="h-6 w-[57px] border-r border-[#666] leading-6">Ref</button>
    </div>
    <button aria-label="New sheet" className="ml-[52px]">
      <svg viewBox="0 0 14 14" className="w-3.5" stroke="#ccc" strokeWidth="1.500">
        <path d="M7 0v14M0 7h14" />
      </svg>
    </button>
    <div className="ml-auto flex items-center">
      <span className="mr-[18px] flex flex-col gap-0.5">
        <i className="h-[3px] w-[3px] bg-[#ccc]" />
        <i className="h-[3px] w-[3px] bg-[#ccc]" />
        <i className="h-[3px] w-[3px] bg-[#ccc]" />
      </span>
      <div className="mr-[29px] flex h-[21px] w-[715px] items-center rounded-full bg-[#161614] pl-1.5">
        <button aria-label="Scroll left">
          <svg viewBox="0 0 9 12" className="w-[9px]" fill="#aaa">
            <path d="M0 6l9-6v12z" />
          </svg>
        </button>
        <span className="ml-auto h-[11px] w-[447px] rounded-full bg-[#9a9a9a]" />
        <button aria-label="Scroll right" className="ml-1.5">
          <svg viewBox="0 0 9 12" className="w-[9px]" fill="#aaa">
            <path d="M9 6L0 0v12z" />
          </svg>
        </button>
      </div>
    </div>
    <div className="pointer-events-none absolute left-[842px] top-0 font-['DejaVu_Sans',sans-serif] text-[62px] font-bold leading-[52px] text-[#a0a0a0]/50">
      خمسات
    </div>
  </div>
);

const StatusBar = () => (
  <footer className="flex h-7 items-center border-t border-[#444] bg-[#151514] text-xs text-white">
    <span className="ml-3.5 text-[13px]">Ready</span>
    <button className="ml-[25px] flex items-center gap-1 font-bold">
      <svg viewBox="0 0 18 18" className="w-[18px]" fill="none" stroke="#fff" strokeWidth="1.300">
        <circle cx="8" cy="3" r="2" />
        <path d="M1 3c0 3 4 3 5 4v4l-3 6M15 3c0 3-4 3-5 4v2M8 11l-2 5M10 10l7 7M17 10l-7 7" />
      </svg>
      Accessibility: Investigate
    </button>
    <div className="ml-auto flex gap-[22px]">
      <span>Average: 292</span>
      <span>Count: 2</span>
      <span>Sum: 292</span>
    </div>
    <div className="ml-[25px] flex h-full">
      <button aria-label="Normal" className="flex w-[50px] items-center justify-center bg-[#222524]">
        <svg viewBox="0 0 18 18" className="w-[18px]" fill="none" stroke="#e8e8e8" strokeWidth="1.600">
          <path d="M1 1h16v16H1zM6.500 1v16M11.500 1v16M1 6.500h16M1 11.500h16" />
        </svg>
      </button>
      <button aria-label="Page Layout" className="flex w-[50px] items-center justify-center">
        <svg viewBox="0 0 18 18" className="w-[18px]" fill="none" stroke="#d8d8d8">
          <path d="M1 1h16v16H1z" strokeWidth="1.800" />
          <path d="M4.500 4h9v10h-9zM6.500 6.500h5M6.500 9h5M6.500 11.500h5" strokeWidth="1.200" />
        </svg>
      </button>
      <button aria-label="Page Break Preview" className="flex w-[50px] items-center justify-center">
        <svg viewBox="0 0 18 18" className="w-[18px]" fill="none" stroke="#d8d8d8" strokeWidth="1.800">
          <path d="M1 1h16v16H1zM6.500 1v9M12 1v9M1 10.500h11" />
        </svg>
      </button>
    </div>
    <div className="flex items-center">
      <button aria-label="Zoom out" className="ml-[7px] w-2.5">
        <span className="block h-px bg-white" />
      </button>
      <label className="relative ml-1.5 flex w-[126px] items-center">
        <span className="absolute left-[62px] h-[7px] w-px bg-[#aaa]" />
        <input
          type="range"
          aria-label="Zoom"
          min={10}
          max={190}
          defaultValue={67}
          className="relative h-px w-full appearance-none bg-[#aaa] [&::-webkit-slider-thumb]:h-3.5 [&::-webkit-slider-thumb]:w-1.5 [&::-webkit-slider-thumb]:appearance-none [&::-webkit-slider-thumb]:bg-[#bbb]"
        />
      </label>
      <button aria-label="Zoom in" className="ml-1">
        <svg viewBox="0 0 10 10" className="w-2.5" stroke="#fff">
          <path d="M5 0v10M0 5h10" />
        </svg>
      </button>
      <span className="ml-[17px] mr-[11px] text-[13px]">66%</span>
    </div>
  </footer>
);

const App: React.FC = () => {
  return (
    <div className="flex min-h-screen flex-col overflow-hidden bg-gradient-to-r from-[#1c1b16] via-[#1b1a15] to-[#1a1914] font-['Noto_Sans','Open_Sans',sans-serif]">
      <div className="bg-[radial-gradient(circle_at_30%_20%,#202527_0%,#1f2222_14%,transparent_32%)]">
        <TitleBar />
        <RibbonTabs />
        <Ribbon />
        <FormulaBar />
      </div>
      <main className="flex">
        <Sheet />
        <VerticalScroll />
      </main>
      <SheetTabs />
      <StatusBar />
    </div>
  );
};

export default App;
